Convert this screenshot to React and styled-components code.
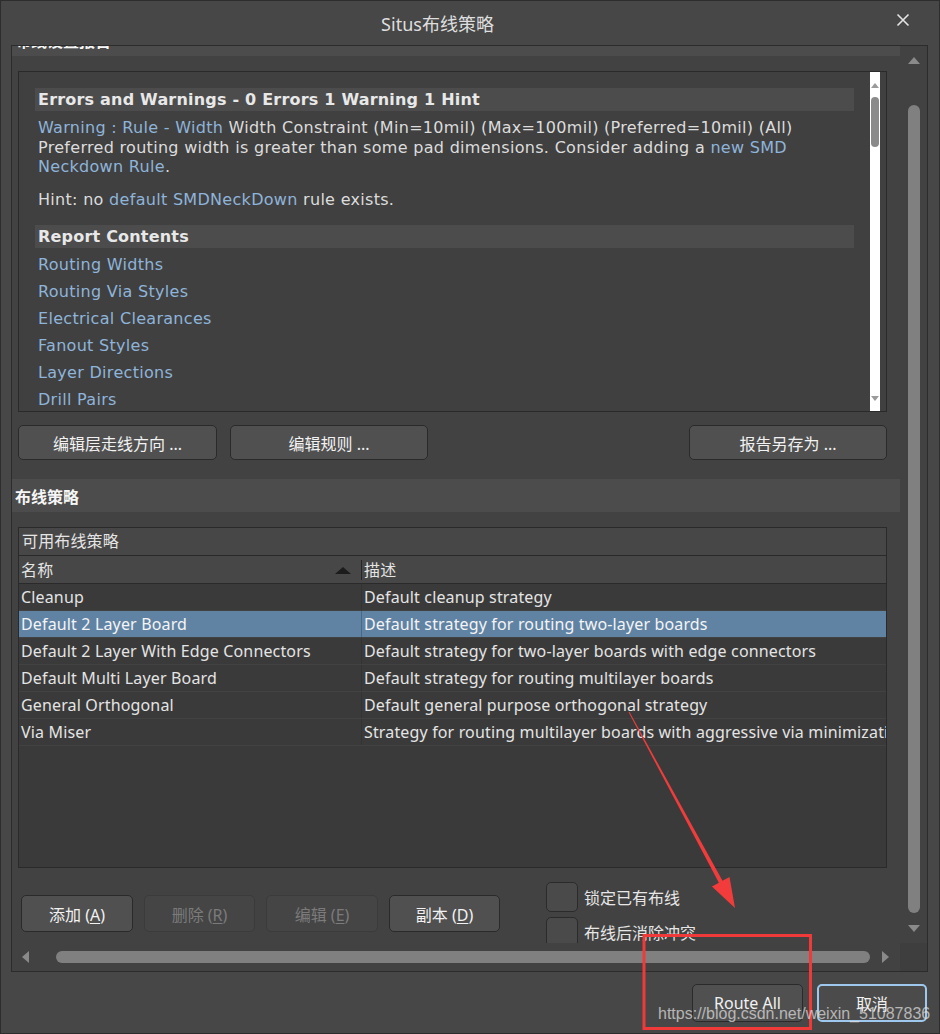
import React from 'react'
import styled, { createGlobalStyle, css } from 'styled-components'

const UI_FONT = `"Noto Sans", "Noto Sans CJK SC", sans-serif`
const REPORT_FONT = `"DejaVu Sans", "Noto Sans CJK SC", sans-serif`

const GlobalStyle = createGlobalStyle`
  html, body {
    margin: 0;
    padding: 0;
    background: #464646;
  }
  body {
    font-family: ${UI_FONT};
  }
  * {
    box-sizing: border-box;
  }
`

const Window = styled.div`
  position: relative;
  width: 940px;
  height: 1034px;
  display: flex;
  flex-direction: column;
  background: #474747;
  border: 1px solid #2d2d2d;
  overflow: hidden;
  font-family: ${UI_FONT};
`

const TitleBar = styled.div`
  height: 44px;
  display: flex;
  align-items: center;
`

const Title = styled.div`
  flex: 1;
  text-align: center;
  padding-right: 6px;
  font-size: 18px;
  color: #dedede;
`

const CloseBox = styled.div`
  width: 59px;
  align-self: flex-start;
  padding: 9px 0 0 16px;
`

const Frame = styled.div`
  margin-left: 10px;
  width: 917px;
  height: 927px;
  border: 1px solid #2c2c2c;
  background: #424242;
  display: grid;
  grid-template-columns: 888px 27px;
  grid-template-rows: 897px 28px;
`

const Viewport = styled.div`
  overflow: hidden;
`

// the frame is scrolled down a little, so the first strip is cut at the top
const ScrollContent = styled.div`
  margin-top: -23px;
  display: flex;
  flex-direction: column;
`

const Strip = styled.div`
  height: 33px;
  margin-top: ${p => p.$top || 0}px;
  display: flex;
  align-items: center;
  padding: ${p => p.$shift || 0}px 0 0 3px;
  background: #4c4c4c;
  color: #f6f6f6;
  font-size: 16px;
  font-weight: 700;
`

const ReportBox = styled.div`
  margin: 15px 0 0 6px;
  width: 869px;
  height: 341px;
  display: flex;
  border: 1px solid #2a2a2a;
  background: #404040;
`

const ReportBody = styled.div`
  flex: 1;
  padding: 16px 0 0 16px;
  overflow: hidden;
  font-family: ${REPORT_FONT};
  font-size: 16px;
  color: #dcdcdc;
  white-space: nowrap;
  letter-spacing: 0.3px;
`

const HeadStrip = styled.div`
  width: 819px;
  height: 23px;
  margin-top: ${p => p.$top || 0}px;
  padding-left: 3px;
  line-height: 23px;
  background: #4c4c4c;
  color: #e8e8e8;
  font-weight: 700;
  letter-spacing: 0.2px;
`

const Para = styled.div`
  margin-top: ${p => p.$top}px;
  padding-left: 3px;
  line-height: ${p => p.$lh}px;
`

const Link = styled.span`
  color: #8fb4da;
`

const LinkList = styled.div`
  margin-top: 3px;
  padding-left: 3px;
  line-height: 27px;
  color: #8fb4da;
`

const InnerScroll = styled.div`
  width: 10px;
  margin-right: 6px;
  background: #ffffff;
  display: flex;
  flex-direction: column;
  align-items: center;
  padding: 11px 0 10px;
`

const InnerThumb = styled.div`
  width: 8px;
  height: 50px;
  margin-top: 9px;
  border-radius: 4px;
  background: #8a8a8a;
`

const Spacer = styled.div`
  flex: 1;
`

const Tri = styled.div`
  width: 0;
  height: 0;
  ${p => (p.$dir === 'up' || p.$dir === 'down') && css`
    border-left: ${p.$s}px solid transparent;
    border-right: ${p.$s}px solid transparent;
  `}
  ${p => p.$dir === 'up' && css`border-bottom: ${p.$h}px solid ${p.$c};`}
  ${p => p.$dir === 'down' && css`border-top: ${p.$h}px solid ${p.$c};`}
  ${p => (p.$dir === 'left' || p.$dir === 'right') && css`
    border-top: ${p.$s}px solid transparent;
    border-bottom: ${p.$s}px solid transparent;
  `}
  ${p => p.$dir === 'left' && css`border-right: ${p.$h}px solid ${p.$c};`}
  ${p => p.$dir === 'right' && css`border-left: ${p.$h}px solid ${p.$c};`}
`

const ButtonRow = styled.div`
  margin-top: 13px;
  padding: 0 13px 0 6px;
  display: flex;
  gap: 13px;
`

const Button = styled.button`
  width: ${p => p.$w}px;
  height: ${p => p.$h || 35}px;
  margin-left: ${p => (p.$push ? 'auto' : '0')};
  padding: 0;
  border: 1px solid #2a2a2a;
  border-radius: 5px;
  background: #505050;
  color: #f2f2f2;
  font-family: ${UI_FONT};
  font-size: 16px;
  ${p => p.$disabled && css`
    background: #454545;
    border-color: #3b3b3b;
    color: #7b7b7b;
  `}
  ${p => p.$focused && css`
    border: 2px solid #9fc8ee;
    background: #4b4b4b;
  `}
  u {
    text-decoration-thickness: 1px;
    text-underline-offset: 2px;
  }
`

const Table = styled.div`
  margin: 15px 0 0 6px;
  width: 869px;
  height: 341px;
  display: flex;
  flex-direction: column;
  border: 1px solid #2a2a2a;
  background: #3a3a3a;
  font-size: 16px;
  letter-spacing: 0.15px;
  color: #e4e4e4;
  overflow: hidden;
`

const GroupHead = styled.div`
  height: 28px;
  padding-left: 3px;
  line-height: 27px;
  background: #474747;
  border-bottom: 1px solid #2a2a2a;
`

const ColHead = styled.div`
  height: 28px;
  display: flex;
  background: #474747;
  border-bottom: 1px solid #2a2a2a;
`

const HeadCell = styled.div`
  width: ${p => (p.$w ? `${p.$w}px` : 'auto')};
  flex: ${p => (p.$w ? 'none' : '1')};
  display: flex;
  align-items: center;
  justify-content: space-between;
  padding: 0 10px 0 2px;
  border-right: ${p => (p.$w ? '1px solid #262626' : 'none')};
  margin: 4px 0 3px;
  line-height: 20px;
`

const Row = styled.div`
  height: 27px;
  display: flex;
  border-bottom: 1px solid #424242;
  background: ${p => (p.$selected ? '#6083a4' : 'transparent')};
  color: ${p => (p.$selected ? '#f4f4f4' : '#e4e4e4')};
  line-height: 26px;
`

const Cell = styled.div`
  width: ${p => (p.$w ? `${p.$w}px` : 'auto')};
  flex: ${p => (p.$w ? 'none' : '1')};
  padding-left: 2px;
  white-space: nowrap;
  overflow: hidden;
  border-right: ${p => (p.$w ? `1px solid ${p.$selected ? '#4b6886' : '#333333'}` : 'none')};
`

const BottomRow = styled.div`
  margin-top: 14px;
  padding-left: 9px;
  display: flex;
  align-items: flex-start;
`

const ButtonGroup = styled.div`
  margin-top: 13px;
  display: flex;
  gap: 11px;
`

const CheckColumn = styled.div`
  margin-left: 46px;
  display: flex;
  flex-direction: column;
  gap: 5px;
`

const CheckRow = styled.div`
  display: flex;
  align-items: center;
`

const CheckBox = styled.div`
  width: 32px;
  height: 30px;
  border: 1px solid #2b2b2b;
  border-radius: 5px;
  background: #4a4a4a;
`

const CheckLabel = styled.span`
  margin-left: 6px;
  font-size: 16px;
  color: #e6e6e6;
`

const VScroll = styled.div`
  display: flex;
  flex-direction: column;
  align-items: center;
  padding-top: 11px;
`

const VThumb = styled.div`
  width: 12px;
  height: 808px;
  margin: 41px 0 12px;
  border-radius: 6px;
  background: #808080;
`

const HScroll = styled.div`
  display: flex;
  align-items: center;
  padding-left: 10px;
`

const HThumb = styled.div`
  width: 814px;
  height: 12px;
  margin: 0 12px 0 27px;
  border-radius: 6px;
  background: #808080;
`

const Corner = styled.div`
  background: #3e3e3e;
`

const Footer = styled.div`
  flex: 1;
  display: flex;
  justify-content: flex-end;
  align-items: flex-start;
  gap: 14px;
  padding: 12px 12px 0 0;
`

const Overlay = styled.svg`
  position: absolute;
  left: -1px;
  top: -1px;
  pointer-events: none;
`

const Watermark = styled.div`
  position: absolute;
  left: 657px;
  top: 1003px;
  font-family: "Liberation Sans", Arial, sans-serif;
  font-size: 16px;
  line-height: 20px;
  color: rgba(225, 225, 225, 0.72);
  pointer-events: none;
`

const reportLinks = [
  'Routing Widths',
  'Routing Via Styles',
  'Electrical Clearances',
  'Fanout Styles',
  'Layer Directions',
  'Drill Pairs',
]

const strategies = [
  { name: 'Cleanup', desc: 'Default cleanup strategy' },
  { name: 'Default 2 Layer Board', desc: 'Default strategy for routing two-layer boards', selected: true },
  { name: 'Default 2 Layer With Edge Connectors', desc: 'Default strategy for two-layer boards with edge connectors' },
  { name: 'Default Multi Layer Board', desc: 'Default strategy for routing multilayer boards' },
  { name: 'General Orthogonal', desc: 'Default general purpose orthogonal strategy' },
  { name: 'Via Miser', desc: 'Strategy for routing multilayer boards with aggressive via minimization' },
]

const App = () => {
  return (
    <>
      <GlobalStyle />
      <Window>
        <TitleBar>
          <Title>Situs布线策略</Title>
          <CloseBox>
            <svg width="14" height="14" viewBox="0 0 14 14">
              <path d="M1.5 1.5 L12.5 12.5 M12.5 1.5 L1.5 12.5" stroke="#e4e4e4" strokeWidth="1.6" fill="none" />
            </svg>
          </CloseBox>
        </TitleBar>

        <Frame>
          <Viewport>
            <ScrollContent>
              <Strip $shift={1}>布线设置报告</Strip>

              <ReportBox>
                <ReportBody>
                  <HeadStrip>Errors and Warnings - 0 Errors 1 Warning 1 Hint</HeadStrip>
                  <Para $top={7} $lh={19.5}>
                    <Link>Warning : Rule - Width</Link> Width Constraint (Min=10mil) (Max=100mil) (Preferred=10mil) (All)
                    <br />
                    Preferred routing width is greater than some pad dimensions. Consider adding a <Link>new SMD</Link>
                    <br />
                    <Link>Neckdown Rule</Link>.
                  </Para>
                  <Para $top={13} $lh={20}>
                    Hint: no <Link>default SMDNeckDown</Link> rule exists.
                  </Para>
                  <HeadStrip $top={15}>Report Contents</HeadStrip>
                  <LinkList>
                    {reportLinks.map(item => (
                      <div key={item}>{item}</div>
                    ))}
                  </LinkList>
                </ReportBody>
                <InnerScroll>
                  <Tri $dir="up" $s={4} $h={5} $c="#9a9a9a" />
                  <InnerThumb />
                  <Spacer />
                  <Tri $dir="down" $s={4} $h={5} $c="#9a9a9a" />
                </InnerScroll>
              </ReportBox>

              <ButtonRow>
                <Button $w={199}>编辑层走线方向 ...</Button>
                <Button $w={198}>编辑规则 ...</Button>
                <Button $w={198} $push>报告另存为 ...</Button>
              </ButtonRow>

              <Strip $top={19}>布线策略</Strip>

              <Table>
                <GroupHead>可用布线策略</GroupHead>
                <ColHead>
                  <HeadCell $w={343}>
                    <span>名称</span>
                    <Tri $dir="up" $s={8} $h={7} $c="#1c1c1c" />
                  </HeadCell>
                  <HeadCell>描述</HeadCell>
                </ColHead>
                {strategies.map(row => (
                  <Row key={row.name} $selected={row.selected}>
                    <Cell $w={343} $selected={row.selected}>{row.name}</Cell>
                    <Cell>{row.desc}</Cell>
                  </Row>
                ))}
              </Table>

              <BottomRow>
                <ButtonGroup>
                  <Button $w={112} $h={37}>添加 (<u>A</u>)</Button>
                  <Button $w={111} $h={37} $disabled>删除 (<u>R</u>)</Button>
                  <Button $w={112} $h={37} $disabled>编辑 (<u>E</u>)</Button>
                  <Button $w={111} $h={37}>副本 (<u>D</u>)</Button>
                </ButtonGroup>
                <CheckColumn>
                  <CheckRow>
                    <CheckBox />
                    <CheckLabel>锁定已有布线</CheckLabel>
                  </CheckRow>
                  <CheckRow>
                    <CheckBox />
                    <CheckLabel>布线后消除冲突</CheckLabel>
                  </CheckRow>
                </CheckColumn>
              </BottomRow>
            </ScrollContent>
          </Viewport>

          <VScroll>
            <Tri $dir="up" $s={6} $h={7} $c="#8a8a8a" />
            <VThumb />
            <Tri $dir="down" $s={6} $h={7} $c="#8a8a8a" />
          </VScroll>

          <HScroll>
            <Tri $dir="left" $s={6} $h={7} $c="#8a8a8a" />
            <HThumb />
            <Tri $dir="right" $s={6} $h={7} $c="#8a8a8a" />
          </HScroll>

          <Corner />
        </Frame>

        <Footer>
          <Button $w={111} $h={38}>Route All</Button>
          <Button $w={110} $h={38} $focused>取消</Button>
        </Footer>

        {/* red annotation drawn over the screenshot */}
        <Overlay width="940" height="1034" viewBox="0 0 940 1034">
          <rect x="644" y="935.5" width="166.5" height="93" fill="none" stroke="#f03a3a" strokeWidth="3" />
          <polygon
            points="629.4,711.8 722.5,880.7 729.5,876.9 735,908 711.9,886.5 718.9,882.7 628.6,712.2"
            fill="#f23c3c"
          />
        </Overlay>

        <Watermark>https://blog.csdn.net/weixin_51087836</Watermark>
      </Window>
    </>
  )
}

export default App
